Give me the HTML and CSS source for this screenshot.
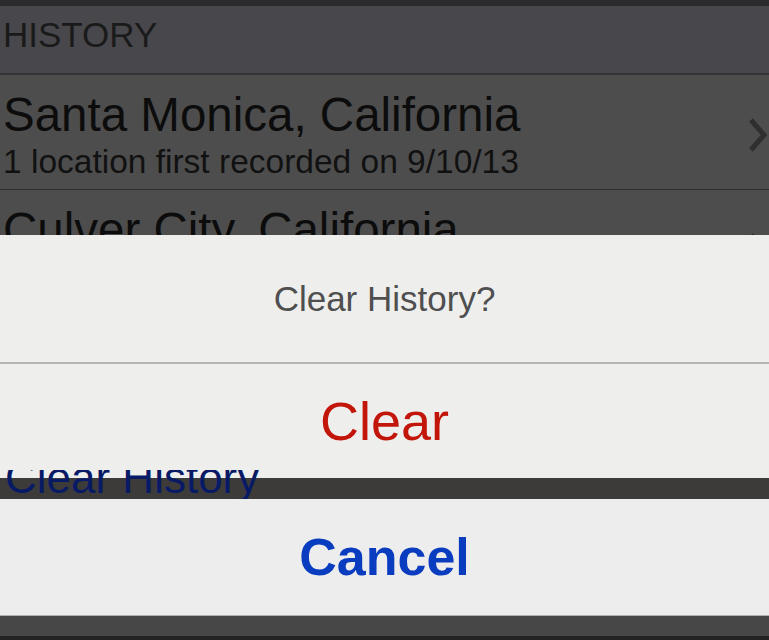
FILE: index.html
```html
<!DOCTYPE html>
<html lang="en">
<head>
  <meta charset="UTF-8">
  <title>Location History</title>
  <link rel="stylesheet" href="styles.css">
</head>
<body>
  <div class="status-strip"></div>

  <div class="history-list">
    <div class="section-header">HISTORY</div>

    <div class="history-row">
      <div class="row-text">
        <div class="row-title">Santa Monica, California</div>
        <div class="row-sub">1 location first recorded on 9/10/13</div>
      </div>
      <svg class="chevron" width="20" height="36" viewBox="0 0 20 36">
        <polyline points="3,3 16,18 3,33" fill="none" stroke="#2f2f2f" stroke-width="5"/>
      </svg>
    </div>

    <div class="history-row">
      <div class="row-text">
        <div class="row-title">Culver City, California</div>
        <div class="row-sub">1 location first recorded on 9/11/13</div>
      </div>
      <svg class="chevron" width="20" height="36" viewBox="0 0 20 36">
        <polyline points="3,3 16,18 3,33" fill="none" stroke="#2f2f2f" stroke-width="5"/>
      </svg>
    </div>
  </div>

  <div class="action-sheet">
    <div class="sheet-title">Clear History?</div>
    <div class="sheet-button destructive">Clear</div>
  </div>

  <div class="sheet-gap">
    <span class="peek-link">Clear History</span>
  </div>

  <div class="cancel-sheet">
    <div class="sheet-button cancel">Cancel</div>
  </div>

  <div class="bottom-strip"></div>
</body>
</html>
```

FILE: styles.css
```css
body {
  margin: 0;
  font-family: "Liberation Sans", Arial, sans-serif;
  background: #222;
  width: 769px;
  height: 640px;
  overflow: hidden;
}

.status-strip {
  height: 6px;
  background: #2b2b2d;
}

.history-list {
  height: 229px;
  overflow: hidden;
  background: #4d4d4d;
}

.section-header {
  background: #48484c;
  height: 35px;
  padding: 11px 0 21px 3px;
  font-size: 35px;
  line-height: 35px;
  color: #1a1a1a;
  border-bottom: 2px solid #333335;
}

.history-row {
  display: flex;
  align-items: center;
  padding: 16px 0 11px 3px;
  border-bottom: 1px solid #2f2f2f;
}

.row-text {
  flex: 1;
}

.row-title {
  font-size: 47.5px;
  line-height: 47.5px;
  color: #0c0c0c;
}

.row-sub {
  margin-top: 6px;
  font-size: 33.5px;
  line-height: 33.5px;
  color: #111;
}

.chevron {
  margin-right: 1px;
}

.action-sheet {
  background: #eeeeed;
  height: 243px;
}

.sheet-title {
  height: 127px;
  display: flex;
  align-items: center;
  justify-content: center;
  font-size: 35px;
  line-height: 35px;
  color: #4f4f4f;
  border-bottom: 2px solid #b5b5b5;
}

.sheet-button {
  display: flex;
  align-items: center;
  justify-content: center;
}

.destructive {
  height: 114px;
  font-size: 54px;
  line-height: 54px;
  color: #c2160b;
}

.sheet-gap {
  position: relative;
  margin-top: -8px;
  height: 29px;
  overflow: hidden;
  background: linear-gradient(transparent 8px, #3c3b39 8px);
}

.peek-link {
  display: block;
  margin: -14px 0 0 5px;
  font-size: 44px;
  line-height: 44px;
  color: #081a66;
}

.cancel-sheet {
  background: #ededed;
  border-bottom: 1px solid #b0b0b0;
}

.cancel {
  height: 116px;
  font-size: 52px;
  line-height: 52px;
  font-weight: bold;
  color: #0a3cc0;
}

.bottom-strip {
  height: 20px;
  background: #474747;
  border-bottom: 4px solid #232323;
}
```
